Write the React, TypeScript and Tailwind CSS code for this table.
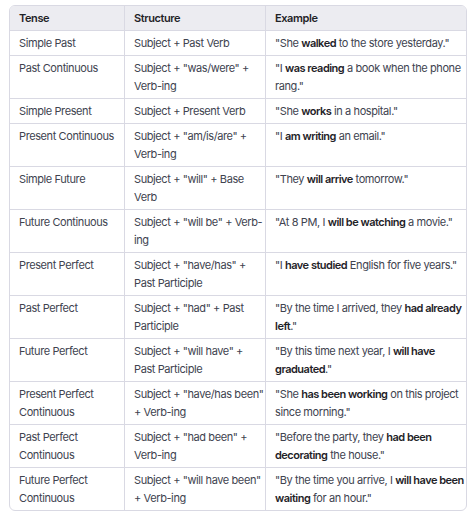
// Each cell: lines split by "|", bold segments wrapped in **...**
type Row = [string, string, string];

const rows: Row[] = [
  ['Simple Past', 'Subject + Past Verb', '"She **walked** to the store yesterday."'],
  ['Past Continuous', 'Subject + "was/were" +|Verb-ing', '"I **was reading** a book when the phone|rang."'],
  ['Simple Present', 'Subject + Present Verb', '"She **works** in a hospital."'],
  ['Present Continuous', 'Subject + "am/is/are" +|Verb-ing', '"I **am writing** an email."'],
  ['Simple Future', 'Subject + "will" + Base|Verb', '"They **will arrive** tomorrow."'],
  ['Future Continuous', 'Subject + "will be" + Verb-|ing', '"At 8 PM, I **will be watching** a movie."'],
  ['Present Perfect', 'Subject + "have/has" +|Past Participle', '"I **have studied** English for five years."'],
  ['Past Perfect', 'Subject + "had" + Past|Participle', '"By the time I arrived, they **had already**|**left**."'],
  ['Future Perfect', 'Subject + "will have" +|Past Participle', '"By this time next year, I **will have**|**graduated**."'],
  ['Present Perfect|Continuous', 'Subject + "have/has been"|+ Verb-ing', '"She **has been working** on this project|since morning."'],
  ['Past Perfect|Continuous', 'Subject + "had been" +|Verb-ing', '"Before the party, they **had been**|**decorating** the house."'],
  ['Future Perfect|Continuous', 'Subject + "will have been"|+ Verb-ing', '"By the time you arrive, I **will have been**|**waiting** for an hour."'],
];

function Text({ src }: { src: string }) {
  return (
    <>
      {src.split('|').map((line, i) => (
        <div key={i} className="whitespace-nowrap">
          {line.split('**').map((seg, j) =>
            j % 2 === 1 ? (
              <strong key={j} className="font-semibold tracking-[-0.5px] text-[#1f2328]">
                {seg}
              </strong>
            ) : (
              <span key={j}>{seg}</span>
            )
          )}
        </div>
      ))}
    </>
  );
}

const cell = 'px-[9px] pt-[3px] pb-[3px] border-b border-[#d9d9e3] leading-[18px]';
const head = `${cell} bg-[#ececf1] font-semibold text-[#1f2328]`;

export default function App() {
  return (
    <div className="min-h-screen bg-white pl-[9px] pt-[5px] font-['Inter',sans-serif] text-[11px] tracking-[-0.4px] text-[#40434f]">
      <div className="w-[458px] overflow-hidden rounded-[6px] border border-[#d9d9e3]">
        <div className="grid grid-cols-[115px_141px_200px]">
          <div className={`${head} border-r`}>Tense</div>
          <div className={`${head} border-r`}>Structure</div>
          <div className={head}>Example</div>
          {rows.map(([tense, structure, example], i) => {
            const last = i === rows.length - 1 ? 'border-b-0' : '';
            return (
              <div key={tense} className="contents">
                <div className={`${cell} ${last} border-r`}>
                  <Text src={tense} />
                </div>
                <div className={`${cell} ${last} border-r`}>
                  <Text src={structure} />
                </div>
                <div className={`${cell} ${last}`}>
                  <Text src={example} />
                </div>
              </div>
            );
          })}
        </div>
      </div>
    </div>
  );
}
